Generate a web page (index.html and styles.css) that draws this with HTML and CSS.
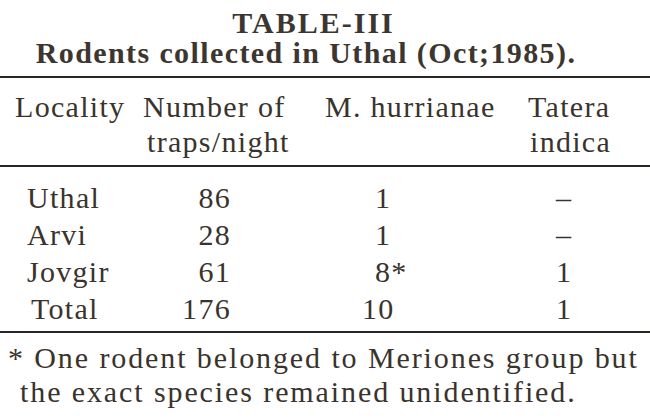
FILE: index.html
```html
<!DOCTYPE html>
<html>
<head>
<meta charset="utf-8">
<link rel="stylesheet" href="styles.css">
</head>
<body>
<div class="page">
  <div class="title">
    <div class="t1">TABLE-III</div>
    <div class="t2">Rodents collected in Uthal (Oct;1985).</div>
  </div>
  <div class="rule rule-top"></div>
  <div class="grid head">
    <div class="h1">Locality</div>
    <div class="h2"><div>Number of</div><div class="h2b">traps/night</div></div>
    <div class="h3">M. hurrianae</div>
    <div class="h4"><div>Tatera</div><div class="h4b">indica</div></div>
  </div>
  <div class="rule rule-mid"></div>
  <div class="rows">
    <div class="grid row"><div class="c1">Uthal</div><div class="c2">86</div><div class="c3">1</div><div class="c4">–</div></div>
    <div class="grid row"><div class="c1">Arvi</div><div class="c2">28</div><div class="c3">1</div><div class="c4">–</div></div>
    <div class="grid row"><div class="c1">Jovgir</div><div class="c2">61</div><div class="c3">8*</div><div class="c4">1</div></div>
    <div class="grid row"><div class="c1 c1t">Total</div><div class="c2">176</div><div class="c3 c3t">10</div><div class="c4">1</div></div>
  </div>
  <div class="rule rule-bot"></div>
  <div class="note">
    <div class="n1">* One rodent belonged to Meriones group but</div>
    <div class="n2">the exact species remained unidentified.</div>
  </div>
</div>
</body>
</html>
```

FILE: styles.css
```css
html, body {
  margin: 0;
  padding: 0;
  background: #ffffff;
}
.page {
  width: 650px;
  height: 419px;
  overflow: hidden;
  font-family: "Liberation Serif", "Times New Roman", serif;
  color: #3a332d;
  font-size: 30px;
  letter-spacing: 1.3px;
}
.title {
  padding-top: 8px;
  padding-right: 26px;
  text-align: center;
  font-weight: 700;
  color: #3d3630;
  line-height: 30px;
}
.t1 {
  letter-spacing: 2px;
  padding-left: 3px;
}
.t2 {
  letter-spacing: 1.4px;
  padding-right: 12px;
}
.rule {
  height: 2px;
  background: #2a2622;
}
.rule-top {
  margin-top: 8px;
}
.grid {
  display: grid;
  grid-template-columns: 140px 180px 200px 130px;
}
.head {
  padding-top: 11px;
  padding-bottom: 6px;
  line-height: 35px;
}
.h1 { padding-left: 15px; }
.h2 { padding-left: 3px; }
.h2b { padding-left: 4px; }
.h3 { padding-left: 5px; }
.h4 { padding-left: 8px; }
.h4b { padding-left: 2px; }
.rows {
  padding-top: 12px;
  padding-bottom: 4px;
}
.row {
  line-height: 37px;
}
.c1 { padding-left: 27px; }
.c1t { padding-left: 31px; }
.c2 {
  text-align: right;
  padding-right: 89px;
}
.c3 { padding-left: 55px; }
.c3t { padding-left: 42px; }
.c4 { padding-left: 36px; }
.note {
  padding-top: 8px;
  font-size: 30px;
  line-height: 34px;
  letter-spacing: 1.9px;
  white-space: nowrap;
}
.n1 { padding-left: 8px; }
.n2 { padding-left: 20px; }
```
